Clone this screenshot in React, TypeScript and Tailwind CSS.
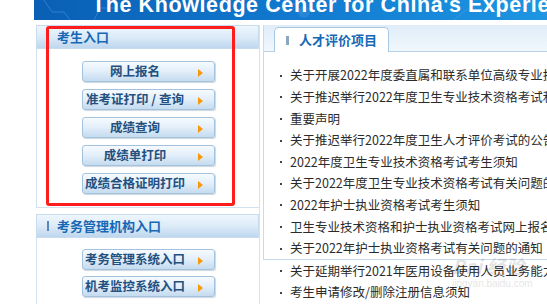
import React from 'react'

const cjk = { fontFamily: '"Noto Sans CJK SC", "Liberation Sans", sans-serif' }

const examineeLinks = ['网上报名', '准考证打印 / 查询', '成绩查询', '成绩单打印', '成绩合格证明打印']
const adminLinks = ['考务管理系统入口', '机考监控系统入口']

const news = [
  '关于开展2022年度委直属和联系单位高级专业技术资格评审工作的通知',
  '关于推迟举行2022年度卫生专业技术资格考试和护士执业资格考试的公告',
  '重要声明',
  '关于推迟举行2022年度卫生人才评价考试的公告',
  '2022年度卫生专业技术资格考试考生须知',
  '关于2022年度卫生专业技术资格考试有关问题的通知',
  '2022年护士执业资格考试考生须知',
  '卫生专业技术资格和护士执业资格考试网上报名须知',
  '关于2022年护士执业资格考试有关问题的通知',
]

const newsAfter = ['关于延期举行2021年医用设备使用人员业务能力考评的通知', '考生申请修改/删除注册信息须知']

function Arrow() {
  return (
    <svg width="5" height="8" viewBox="0 0 5 8" className="absolute right-[11px] top-[7px]">
      <polygon points="0,0 5,4 0,8" fill="#f59a0c" />
    </svg>
  )
}

function EntryButton({ label }: { label: string }) {
  return (
    <div className="relative h-[21px] w-[133px] rounded-[3px] border border-[#a3c2de] bg-gradient-to-b from-[#f6fafe] via-[#e2eefa] to-[#c4dbef] shadow-[1px_1px_1px_rgba(60,90,120,0.25)] flex items-center justify-center pr-[27px]">
      <span className="text-[12.5px] font-bold leading-none text-[#23507f] whitespace-nowrap" style={cjk}>
        {label}
      </span>
      <Arrow />
    </div>
  )
}

function PanelHeader({ title }: { title: string }) {
  return (
    <div className="h-[24px] border border-[#c8dcee] bg-gradient-to-b from-[#eef6fd] via-[#dcebf8] to-[#bed7ee] flex items-center pl-[10px]">
      <span className="w-[2px] h-[10px] bg-[#5b88b8] mr-[8px]" />
      <span className="text-[13px] font-bold text-[#1768b5]" style={cjk}>
        {title}
      </span>
    </div>
  )
}

function NewsItem({ text }: { text: string }) {
  return (
    <li className="h-[21.6px] flex items-center whitespace-nowrap">
      <span className="w-[2px] h-[2px] bg-[#444] mr-[8px] shrink-0" />
      <span className="text-[12.5px] text-[#2b2b2b]" style={cjk}>
        {text}
      </span>
    </li>
  )
}

export default function App() {
  return (
    <div className="relative w-[547px] h-[304px] overflow-hidden bg-white">
      {/* banner */}
      <div className="ml-[34px] h-[20px] overflow-hidden relative bg-gradient-to-r from-[#0a5fb4] via-[#1179cf] to-[#1e96e2]">
        <svg width="513" height="20" className="absolute left-0 top-0" fill="none" stroke="#5aa7e6" strokeOpacity="0.45">
          <path d="M10 0 L18 12 L30 12 L36 20" />
          <path d="M60 20 L66 8 L80 8" />
          <circle cx="270" cy="12" r="6" fill="#3b8fd8" fillOpacity="0.5" stroke="none" />
          <path d="M250 4 L262 4 L268 14" />
          <path d="M420 20 L432 10 L450 10" />
        </svg>
        <div
          className="absolute left-[58px] top-[-5.5px] whitespace-nowrap text-[21.5px] leading-none font-bold text-white tracking-[0.6px]"
          style={{ fontFamily: '"Liberation Sans", Arial, sans-serif' }}
        >
          The Knowledge Center for China's Experience
        </div>
      </div>

      <div className="flex mt-[5px]">
        {/* left column */}
        <div className="ml-[36px] w-[224px] shrink-0 border-r border-[#d2e2f0]">
          <div className="relative">
            <PanelHeader title="考生入口" />
            <div className="border-l border-b border-[#d2e2f0] flex flex-col items-start gap-[7px] pt-[12px] pb-[13px] pl-[45px]">
              {examineeLinks.map((l) => (
                <EntryButton key={l} label={l} />
              ))}
            </div>
            {/* red annotation box */}
            <div className="absolute left-[10px] top-[1px] w-[189px] h-[180px] border-[3px] border-[#ff1c1c] rounded-[3px]" />
          </div>

          <div className="mt-[6px]">
            <PanelHeader title="考务管理机构入口" />
            <div className="border-l border-[#d2e2f0] h-[80px] flex flex-col items-start gap-[6px] pt-[11px] pl-[45px]">
              {adminLinks.map((l) => (
                <EntryButton key={l} label={l} />
              ))}
            </div>
          </div>
        </div>

        {/* right column */}
        <div className="ml-[3px] flex-1 min-w-0">
          <div className="border-l border-b border-[#c7dbee]">
            <div className="h-[27px] border-b border-[#b8d2ea] bg-gradient-to-b from-[#dfedf9] to-[#f1f7fd] flex items-end pl-[10px]">
              <div className="h-[25px] w-[115px] -mb-px bg-white border border-b-0 border-[#a9c8e4] rounded-t-[5px] flex items-center pl-[11px]">
                <span className="w-[3px] h-[9px] bg-[#8aa6c2] mr-[10px]" />
                <span className="text-[13px] font-bold text-[#1768b5]" style={cjk}>
                  人才评价项目
                </span>
              </div>
            </div>
            <ul className="pl-[16px] pt-[13px]">
              {news.map((n) => (
                <NewsItem key={n} text={n} />
              ))}
            </ul>
          </div>
          <ul className="pl-[17px]">
            {newsAfter.map((n) => (
              <NewsItem key={n} text={n} />
            ))}
          </ul>
        </div>
      </div>

      {/* watermark */}
      <div className="absolute left-[452px] top-[256px] text-[#000] opacity-[0.1] leading-none pointer-events-none" style={cjk}>
        <div className="text-[19px] font-bold italic">Bai 经验</div>
        <div className="text-[10px] mt-[4px]" style={{ fontFamily: '"Liberation Sans", sans-serif' }}>
          jingyan.baidu.com
        </div>
      </div>
    </div>
  )
}
